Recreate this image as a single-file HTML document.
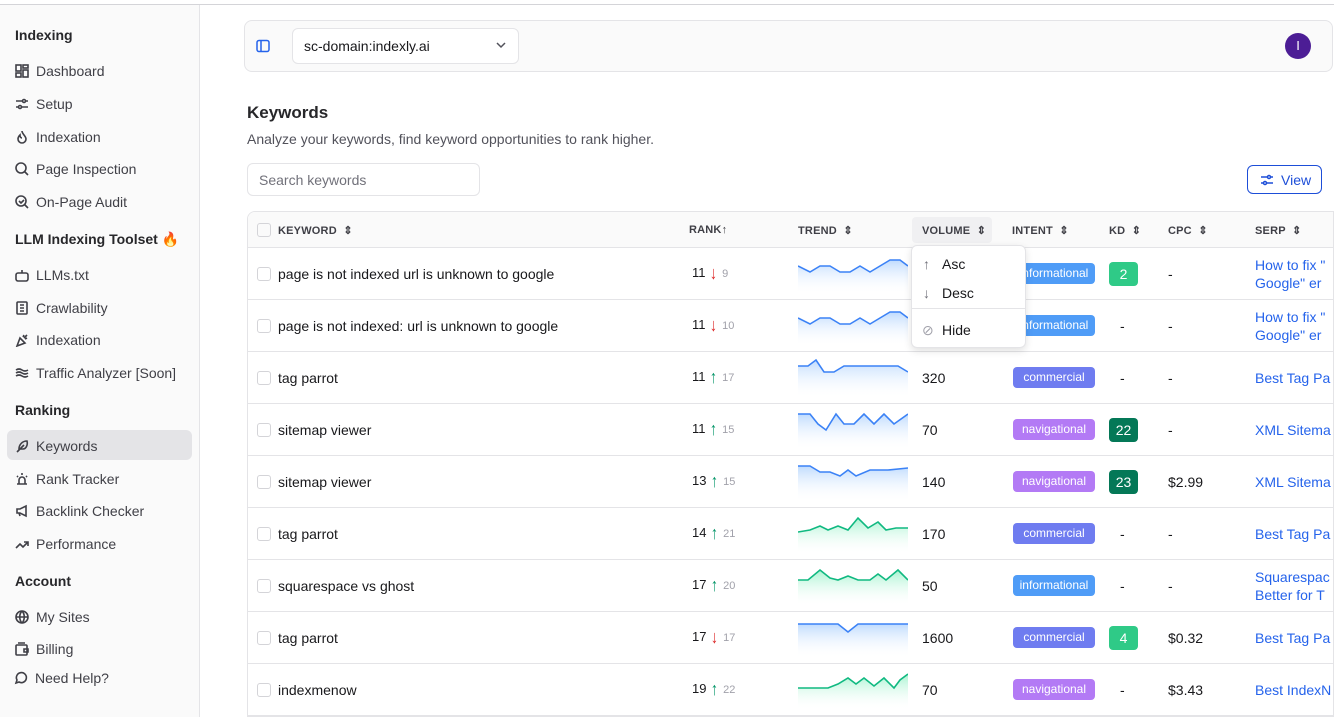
<!DOCTYPE html>
<html><head><meta charset="utf-8"><style>
*{box-sizing:border-box;margin:0;padding:0}
body{width:1334px;height:717px;overflow:hidden;background:#fff;font-family:"Liberation Sans",sans-serif;color:#18181b;position:relative}
.top{position:absolute;left:0;top:0;width:1334px;height:5px;border-bottom:1px solid #d4d4d8;background:#fff}
.side{position:absolute;left:0;top:5px;width:200px;height:712px;background:#fafafa;border-right:1px solid #e4e4e7}
.sh{position:absolute;left:15px;font-size:14px;font-weight:bold;color:#27272a}
.si{position:absolute;left:15px;font-size:14px;color:#3f3f46;display:flex;align-items:center;gap:7px}
.si svg{width:14px;height:14px;stroke:#3f3f46;fill:none;stroke-width:1.6}
.act{position:absolute;left:7px;width:185px;height:30px;background:#e4e4e7;border-radius:6px}
.hdr{position:absolute;left:244px;top:20px;width:1089px;height:52px;border:1px solid #e4e4e7;border-radius:8px;background:#fafafa}
.sel{position:absolute;left:292px;top:28px;width:227px;height:36px;border:1px solid #e4e4e7;border-radius:6px;background:#fff;font-size:14px;padding:9px 11px}
.av{position:absolute;left:1285px;top:33px;width:26px;height:26px;border-radius:50%;background:#4c1d95;color:#fff;font-size:13px;text-align:center;line-height:26px}
h1{position:absolute;left:247px;top:103px;font-size:17px;font-weight:bold;color:#27272a}
.sub{position:absolute;left:247px;top:131px;font-size:14px;color:#52525b}
.search{position:absolute;left:247px;top:163px;width:233px;height:33px;border:1px solid #e4e4e7;border-radius:6px;font-size:14px;color:#71717a;padding:8px 11px}
.view{position:absolute;left:1247px;top:165px;width:75px;height:29px;border:1px solid #1d4ed8;border-radius:6px;color:#1d4ed8;font-size:14px;padding:6px 0 0 33px}
.tbl{position:absolute;left:247px;top:211px;width:1087px;height:506px;border:1px solid #e4e4e7;border-radius:8px 0 0 0;overflow:hidden}
.th{position:absolute;left:0;top:0;width:100%;height:36px;background:#fafafa;border-bottom:1px solid #e4e4e7}
.hc{position:absolute;top:12px;font-size:11px;font-weight:bold;color:#3f3f46;letter-spacing:.2px}
.row{position:absolute;left:0;width:100%;height:52px;border-bottom:1px solid #e4e4e7}
.cb{position:absolute;left:9px;width:14px;height:14px;border:1px solid #d4d4d8;border-radius:3px;top:19px}
.kw{position:absolute;left:30px;top:18px;font-size:14px}
.rk{position:absolute;left:444px;top:16px;font-size:13px}
.rk small{font-size:11px;color:#a1a1aa;margin-left:4px}
.up,.dn{font-size:18px;display:inline-block;transform:scaleX(.8);line-height:18px;vertical-align:-2px}
.up{color:#059669}.dn{color:#dc2626}
.tr{position:absolute;left:550px;top:6px}
.vol{position:absolute;left:674px;top:18px;font-size:14px}
.in{position:absolute;left:765px;top:15px;width:82px;height:21px;border-radius:4px;color:#fff;font-size:12px;text-align:center;line-height:21px}
.inf{background:#4f9cf7}.com{background:#6f7cf0}.nav{background:#b37af5}
.kd{position:absolute;left:861px;top:14px;width:29px;height:24px;border-radius:4px;color:#fff;font-size:14px;text-align:center;line-height:24px}
.dash{position:absolute;top:18px;font-size:14px}
.cpc{position:absolute;left:920px;top:18px;font-size:14px}
.serp{position:absolute;left:1007px;font-size:14px;color:#2563eb;line-height:18px;white-space:nowrap}
.menu{position:absolute;left:911px;top:245px;width:115px;height:103px;background:#fff;border:1px solid #e4e4e7;border-radius:6px;box-shadow:0 3px 8px rgba(0,0,0,.12);font-size:14px}
.menu div{position:absolute;left:30px}
</style></head><body>
<div class="top"></div>
<div class="side">
<div class="act" style="top:425px"></div>
</div>
<div class="sh" style="top:27px">Indexing</div>
<div class="si" style="top:63px"><svg viewBox="0 0 14 14"><rect x="1" y="1" width="5" height="6"/><rect x="8" y="1" width="5" height="3"/><rect x="8" y="6" width="5" height="7"/><rect x="1" y="9" width="5" height="4"/></svg>Dashboard</div>
<div class="si" style="top:96px"><svg viewBox="0 0 14 14"><path d="M1 4h6M11 4h2M1 10h2M7 10h6"/><circle cx="9" cy="4" r="1.5"/><circle cx="5" cy="10" r="1.5"/></svg>Setup</div>
<div class="si" style="top:129px"><svg viewBox="0 0 14 14"><path d="M7 1c0 3 4 5 4 8a4 4 0 0 1-8 0c0-2 1-3 2-4 0 2 1 3 2 3"/></svg>Indexation</div>
<div class="si" style="top:161px"><svg viewBox="0 0 14 14"><circle cx="6" cy="6" r="5"/><path d="M10 10l3 3"/></svg>Page Inspection</div>
<div class="si" style="top:194px"><svg viewBox="0 0 14 14"><circle cx="6" cy="6" r="5"/><path d="M10 10l3 3M4 6l2 2 3-3"/></svg>On-Page Audit</div>
<div class="sh" style="top:231px">LLM Indexing Toolset <span style="color:#f97316">🔥</span></div>
<div class="si" style="top:267px"><svg viewBox="0 0 14 14"><rect x="1" y="5" width="12" height="8" rx="2"/><path d="M7 5V2M5 9h0M9 9h0"/></svg>LLMs.txt</div>
<div class="si" style="top:300px"><svg viewBox="0 0 14 14"><rect x="2" y="1" width="10" height="12" rx="1"/><path d="M5 4h4M5 7h4M5 10h4"/></svg>Crawlability</div>
<div class="si" style="top:332px"><svg viewBox="0 0 14 14"><path d="M2 13l3-8 5 5zM9 2l-1 2M12 5l-2 1M12 2l-3 3"/></svg>Indexation</div>
<div class="si" style="top:365px"><svg viewBox="0 0 14 14"><path d="M1 4q3-2 6 0t6 0M1 7q3-2 6 0t6 0M1 10q3-2 6 0t6 0"/></svg>Traffic Analyzer [Soon]</div>
<div class="sh" style="top:402px">Ranking</div>
<div class="si" style="top:438px"><svg viewBox="0 0 14 14"><path d="M2 13L9 6M12 2c-5 0-8 4-8 8h4c3 0 5-4 4-8z"/></svg>Keywords</div>
<div class="si" style="top:471px"><svg viewBox="0 0 14 14"><path d="M4 12V8a3 3 0 0 1 6 0v4M2 12h10M7 1v2M2 4l1 1M12 4l-1 1"/></svg>Rank Tracker</div>
<div class="si" style="top:503px"><svg viewBox="0 0 14 14"><path d="M2 5h3l6-3v10l-6-3H2zM4 9l1 3"/></svg>Backlink Checker</div>
<div class="si" style="top:536px"><svg viewBox="0 0 14 14"><path d="M1 11l4-4 3 3 5-5M9 5h4v4"/></svg>Performance</div>
<div class="sh" style="top:573px">Account</div>
<div class="si" style="top:609px"><svg viewBox="0 0 14 14"><circle cx="7" cy="7" r="6"/><path d="M1 7h12M7 1c-3 3-3 9 0 12M7 1c3 3 3 9 0 12"/></svg>My Sites</div>
<div class="si" style="top:641px"><svg viewBox="0 0 14 14"><rect x="1" y="3" width="11" height="10" rx="1"/><path d="M3 1h7M9 7h4v3H9z"/></svg>Billing</div>
<div class="si" style="top:670px;left:14px"><svg viewBox="0 0 14 14"><path d="M2 12l1-3a5 5 0 1 1 2 2z"/></svg>Need Help?</div>

<div class="hdr"></div>
<svg style="position:absolute;left:256px;top:39px" width="14" height="14" viewBox="0 0 14 14" fill="none" stroke="#2563eb" stroke-width="1.5"><rect x="1" y="1.5" width="12" height="11" rx="2"/><path d="M5 2v10"/></svg>
<div class="sel">sc-domain:indexly.ai<svg style="position:absolute;right:12px;top:13px" width="10" height="7" viewBox="0 0 10 7" fill="none" stroke="#52525b" stroke-width="1.5"><path d="M1 1l4 4 4-4"/></svg></div>
<div class="av">I</div>
<h1>Keywords</h1>
<div class="sub">Analyze your keywords, find keyword opportunities to rank higher.</div>
<div class="search">Search keywords</div>
<div class="view"><svg style="position:absolute;left:12px;top:7px" width="14" height="14" viewBox="0 0 14 14" fill="none" stroke="#1d4ed8" stroke-width="1.5"><path d="M1 4h6M11 4h2M1 10h2M7 10h6"/><circle cx="9" cy="4" r="1.5"/><circle cx="5" cy="10" r="1.5"/></svg>View</div>

<div class="tbl">
<div class="th">
<div class="cb" style="top:11px"></div>
<div class="hc" style="left:30px">KEYWORD &nbsp;⇕</div>
<div class="hc" style="left:441px">RANK↑</div>
<div class="hc" style="left:550px">TREND &nbsp;⇕</div>
<div style="position:absolute;left:664px;top:5px;width:80px;height:26px;background:#f0f0f2;border-radius:4px"></div>
<div class="hc" style="left:674px">VOLUME &nbsp;⇕</div>
<div class="hc" style="left:764px">INTENT &nbsp;⇕</div>
<div class="hc" style="left:861px">KD &nbsp;⇕</div>
<div class="hc" style="left:920px">CPC &nbsp;⇕</div>
<div class="hc" style="left:1007px">SERP &nbsp;⇕</div>
</div>
<div id="rows"></div>
</div>
<div class="menu">
<div style="top:10px;left:11px;color:#71717a">↑</div><div style="top:10px">Asc</div>
<div style="top:39px;left:11px;color:#71717a">↓</div><div style="top:39px">Desc</div>
<div style="top:62px;left:0;width:113px;border-top:1px solid #e4e4e7"></div>
<div style="top:76px;left:10px;color:#a1a1aa">⊘</div><div style="top:76px">Hide</div>
</div>
<script>
const B='#3b82f6',T='#10b981';
const rows=[
['page is not indexed url is unknown to google','11','dn','9',B,'0,12 12,18 22,12 32,12 42,18 52,18 62,12 72,18 82,12 92,6 102,6 110,12','','inf','informational',['2','#2fca87'],'-',['How to fix "','Google" er']],
['page is not indexed: url is unknown to google','11','dn','10',B,'0,12 12,18 22,12 32,12 42,18 52,18 62,12 72,18 82,12 92,6 102,6 110,12','','inf','informational',null,'-',['How to fix "','Google" er']],
['tag parrot','11','up','17',B,'0,8 10,8 18,2 26,14 36,14 46,8 60,8 100,8 110,14','320','com','commercial',null,'-',['Best Tag Pa']],
['sitemap viewer','11','up','15',B,'0,4 12,4 20,14 28,20 38,4 46,14 56,14 66,4 76,14 86,4 96,14 110,4','70','nav','navigational',['22','#047857'],'-',['XML Sitema']],
['sitemap viewer','13','up','15',B,'0,4 12,4 22,10 32,10 42,14 50,8 58,14 72,8 90,8 110,6','140','nav','navigational',['23','#047857'],'$2.99',['XML Sitema']],
['tag parrot','14','up','21',T,'0,18 12,16 22,12 30,16 40,12 50,16 60,4 70,14 80,8 88,16 98,14 110,14','170','com','commercial',null,'-',['Best Tag Pa']],
['squarespace vs ghost','17','up','20',T,'0,14 10,14 22,4 32,12 40,14 50,10 60,14 72,14 80,8 88,14 100,4 110,14','50','inf','informational',null,'-',['Squarespac','Better for T']],
['tag parrot','17','dn','17',B,'0,6 40,6 50,14 60,6 110,6','1600','com','commercial',['4','#2fca87'],'$0.32',['Best Tag Pa']],
['indexmenow','19','up','22',T,'0,18 30,18 40,14 50,8 58,14 66,8 76,16 86,8 96,18 102,10 110,4','70','nav','navigational',null,'$3.43',['Best IndexN']]];
let h='';rows.forEach((r,i)=>{const y=36+i*52;
const fill=r[4]==B?'#bfdbfe':'#a7f3d0';
h+=`<div class="row" style="top:${y}px"><div class="cb"></div><div class="kw">${r[0]}</div>
<div class="rk">${r[1]} <span class="${r[2]}">${r[2]=='up'?'↑':'↓'}</span><small>${r[3]}</small></div>
<svg class="tr" width="110" height="40" viewBox="0 0 110 40"><defs><linearGradient id="g${i}" x1="0" y1="0" x2="0" y2="1"><stop offset="0" stop-color="${fill}"/><stop offset="1" stop-color="#fff" stop-opacity="0"/></linearGradient></defs><polygon points="${r[5]} 110,40 0,40" fill="url(#g${i})"/><polyline points="${r[5]}" fill="none" stroke="${r[4]}" stroke-width="1.6"/></svg>
<div class="vol">${r[6]}</div><div class="in ${r[7]}">${r[8]}</div>
${r[9]?`<div class="kd" style="background:${r[9][1]}">${r[9][0]}</div>`:'<div class="dash" style="left:872px">-</div>'}
<div class="cpc">${r[10]}</div>
<div class="serp" style="top:${r[11].length>1?8:17}px">${r[11].join('<br>')}</div></div>`;});
document.getElementById('rows').innerHTML=h;
</script>
</body></html>
